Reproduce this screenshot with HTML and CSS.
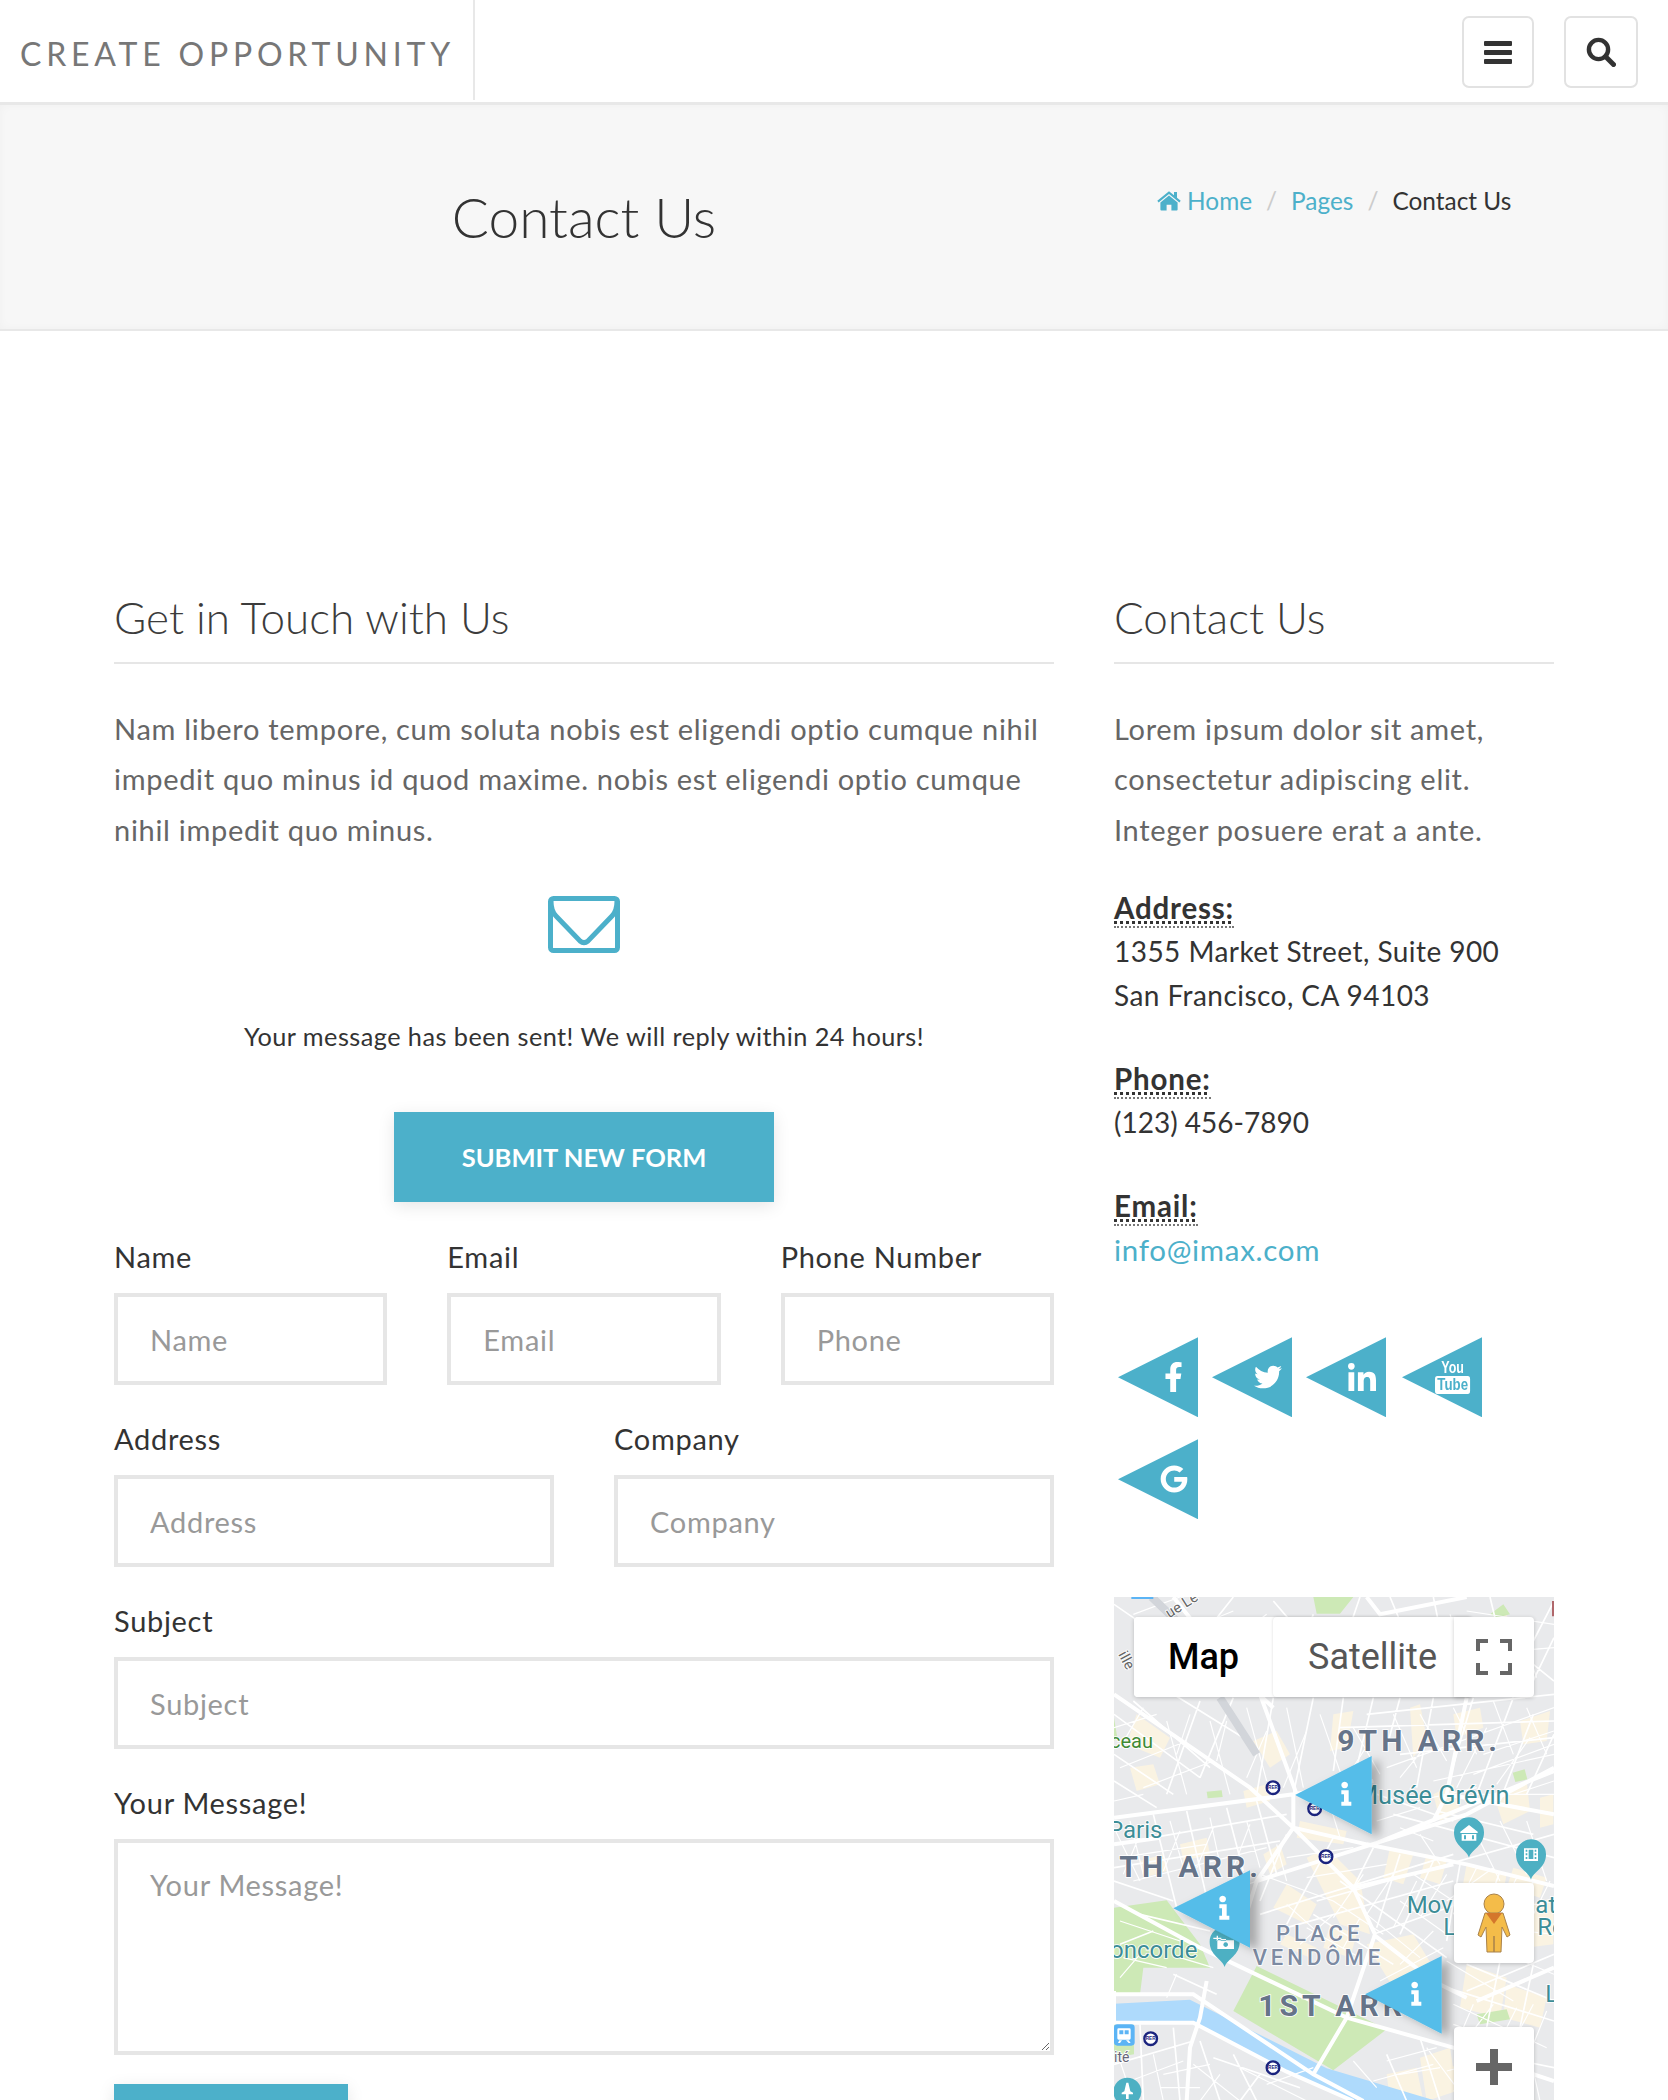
FILE: index.html
```html
<!DOCTYPE html>
<html lang="en">
<head>
    <meta charset="UTF-8">
    <meta name="viewport" content="width=device-width, initial-scale=1.0">
    <title>Contact Us</title>
    <link rel="stylesheet" href="styles.css">
</head>
<body>
    <header class="topbar">
        <a class="logo" href="#">CREATE OPPORTUNITY</a>
        <div class="topbar-actions">
            <button class="icon-btn" aria-label="Menu">
                <svg viewBox="0 0 28 28" width="28" height="28"><rect y="3" width="28" height="5" rx="1"/><rect y="12" width="28" height="5" rx="1"/><rect y="21" width="28" height="5" rx="1"/></svg>
            </button>
            <button class="icon-btn icon-btn-search" aria-label="Search">
                <svg viewBox="0 0 30 30" width="30" height="30"><circle cx="12.5" cy="12.5" r="9.6" fill="none" stroke="#333" stroke-width="4.4"/><path d="M19.5 19.5l8 8" stroke="#333" stroke-width="5" stroke-linecap="round"/></svg>
            </button>
        </div>
    </header>

    <section class="page-title">
        <h1>Contact Us</h1>
        <ol class="breadcrumb">
            <li><a href="#"><svg class="home-icon" viewBox="0 0 24 20" width="24" height="20"><path d="M12 4.4L3.4 11.5v7a.9.9 0 0 0 .9.9h5.3v-5.6h4.8v5.6h5.3a.9.9 0 0 0 .9-.9v-7zM23.7 9.8L20 6.8V1h-3v3.3L12 .3.300 9.800l1.300 1.600L12 2.900l10.400 8.500z"/></svg> Home</a></li>
            <li class="sep">/</li>
            <li><a href="#">Pages</a></li>
            <li class="sep">/</li>
            <li>Contact Us</li>
        </ol>
    </section>

    <main class="content">
        <div class="main-col">
            <h3 class="section-title">Get in Touch with Us</h3>
            <p class="lead">Nam libero tempore, cum soluta nobis est eligendi optio cumque nihil impedit quo minus id quod maxime. nobis est eligendi optio cumque nihil impedit quo minus.</p>

            <div class="sent-box">
                <svg class="sent-icon" viewBox="0 0 72 57" width="72" height="57"><rect x="2.500" y="2.500" width="67" height="52" rx="3" fill="none" stroke="#4cb0ca" stroke-width="5"/><path d="M3 5c0 7 2 12 5 15l24 25c2.500 2 5.500 2 8 0l24-25c3-3 5-8 5-15" fill="none" stroke="#4cb0ca" stroke-width="5"/></svg>
                <p class="sent-msg">Your message has been sent! We will reply within 24 hours!</p>
                <button class="btn">SUBMIT NEW FORM</button>
            </div>

            <form class="contact-form">
                <div class="form-row cols-3">
                    <div class="field"><label>Name</label><input type="text" placeholder="Name"></div>
                    <div class="field"><label>Email</label><input type="text" placeholder="Email"></div>
                    <div class="field"><label>Phone Number</label><input type="text" placeholder="Phone"></div>
                </div>
                <div class="form-row cols-2">
                    <div class="field"><label>Address</label><input type="text" placeholder="Address"></div>
                    <div class="field"><label>Company</label><input type="text" placeholder="Company"></div>
                </div>
                <div class="form-row">
                    <div class="field"><label>Subject</label><input type="text" placeholder="Subject"></div>
                </div>
                <div class="form-row">
                    <div class="field"><label>Your Message!</label><textarea placeholder="Your Message!"></textarea></div>
                </div>
                <button class="btn btn-send" type="button">SUBMIT</button>
            </form>
        </div>

        <aside class="side-col">
            <h3 class="section-title">Contact Us</h3>
            <p class="lead">Lorem ipsum dolor sit amet, consectetur adipiscing elit. Integer posuere erat a ante.</p>

            <div class="info">
                <abbr>Address:</abbr>
                <span>1355 Market Street, Suite 900</span>
                <span>San Francisco, CA 94103</span>
            </div>
            <div class="info">
                <abbr>Phone:</abbr>
                <span class="tel">(123) 456-7890</span>
            </div>
            <div class="info">
                <abbr>Email:</abbr>
                <a href="#">info@imax.com</a>
            </div>

            <div class="social">
                <a class="tri tri-fb" href="#"><svg viewBox="0 0 320 512" width="19" height="30"><path d="M279.14 288l14.22-92.66h-88.91v-60.13c0-25.35 12.42-50.06 52.24-50.06h40.42V6.26S260.43 0 225.36 0c-73.22 0-121.08 44.38-121.08 124.72v70.62H22.89V288h81.39v224h100.17V288z"/></svg></a>
                <a class="tri" href="#"><svg viewBox="0 0 512 512" width="28" height="28"><path d="M459.37 151.716c.325 4.548.325 9.097.325 13.645 0 138.72-105.583 298.558-298.558 298.558-59.452 0-114.68-17.219-161.137-47.106 8.447.974 16.568 1.299 25.34 1.299 49.055 0 94.213-16.568 130.274-44.832-46.132-.975-84.792-31.188-98.112-72.772 6.498.974 12.995 1.624 19.818 1.624 9.421 0 18.843-1.3 27.614-3.573-48.081-9.747-84.143-51.98-84.143-102.985v-1.299c13.969 7.797 30.214 12.67 47.431 13.319-28.264-18.843-46.781-51.005-46.781-87.391 0-19.492 5.197-37.36 14.294-52.954 51.655 63.675 129.3 105.258 216.365 109.807-1.624-7.797-2.599-15.918-2.599-24.04 0-57.828 46.782-104.934 104.934-104.934 30.213 0 57.502 12.67 76.67 33.137 23.715-4.548 46.456-13.645 66.599-25.665-7.798 24.366-24.366 44.833-46.132 57.827 21.117-2.273 41.584-8.122 60.426-16.243-14.292 20.791-32.161 39.308-52.628 54.253z"/></svg></a>
                <a class="tri" href="#"><svg viewBox="0 0 448 448" width="28" height="28"><path d="M100.28 448H7.4V148.9h92.88zM53.79 108.1C24.09 108.1 0 83.5 0 53.8a53.79 53.79 0 0 1 107.58 0c0 29.7-24.1 54.3-53.79 54.3zM447.9 448h-92.68V302.4c0-34.7-.7-79.2-48.29-79.2-48.29 0-55.69 37.7-55.69 76.7V448h-92.78V148.9h89.08v40.8h1.3c12.4-23.5 42.69-48.3 87.88-48.3 94 0 111.28 61.9 111.28 142.3V448z"/></svg></a>
                <a class="tri tri-yt" href="#"><span class="yt"><span>You</span><span class="yt-tube">Tube</span></span></a>
                <a class="tri" href="#"><svg viewBox="0 0 488 512" width="28" height="28"><path d="M488 261.8C488 403.3 391.1 504 248 504 110.8 504 0 393.2 0 256S110.8 8 248 8c66.8 0 123 24.5 166.3 64.9l-67.5 64.9C258.5 52.6 94.3 116.6 94.3 256c0 86.5 69.1 156.6 153.7 156.6 98.2 0 135-70.4 140.8-106.9H248v-85.3h236.1c2.3 12.7 3.9 24.9 3.9 41.4z"/></svg></a>
            </div>

            <div class="map">
                <svg class="map-canvas" viewBox="42 48 1320 1512">
                    <defs>
                        <filter id="pinshadow" x="-20%" y="-20%" width="160%" height="150%"><feDropShadow dx="24" dy="10" stdDeviation="14" flood-color="#000" flood-opacity=".28"/></filter>
                        <path id="info-i" d="M-14 -8h22v34h8v12h-30v-12h8v-22h-8zM-4 -34a10 10 0 1 1 -.1 0z"/>
                    </defs>
                    <rect class="m-base" x="42" y="48" width="1320" height="1512"/>

                    <!-- blocks -->
                    <path class="m-block" d="M930 380l30 -10 20 100 -40 60zM620 830l60 -30 100 100 30 160 -90 -30zM1100 850l120 30 -20 100 -120 -20zM1180 1000l180 -50v140l-160 20zM800 1090l140 -30 60 100 -120 60zM560 910l90 60 -30 60 -100 -50zM110 400l100 70 -30 60 -100 -40zM90 560l70 -10 20 60 -70 20zM960 1430l90 -30 20 130 -90 30zM1100 1150l120 40 -20 120 -120 -30zM600 720l140 30 -10 40 -140 -20zM1000 640l60 -30 20 80 -60 30zM1180 640l100 -40 10 90 -80 40zM430 630l70 -20 10 50 -70 20zM1050 1460l120 -50 90 100 -80 50 -100 0zM860 1480l90 -20 20 100 -100 0zM460 480l70 -30 40 70 -60 40zM700 400l60 -10 -20 110 -50 10zM1060 400l80 -20 10 60 -80 30zM1260 420l90 -30 -10 90 -70 10zM870 800l70 20 -30 90 -60 -20zM980 820l60 20 -20 70 -60 -20zM690 1030l80 30 -20 70 -80 -30zM560 1060l90 40 -20 30 -90 -40zM1240 860l100 30 -20 60 -100 -30zM1320 650l40 -10v90l-40 10zM1220 1210l120 40 -20 90 -110 -30zM490 820l50 -30 20 60 -50 30zM120 840l70 -20 10 50 -70 20zM240 790l80 -20 10 50 -80 20zM1150 120l70 -20 10 50 -70 20zM860 150l90 -20 10 60 -90 20z"/>

                    <!-- water and parks -->
                    <path class="m-water" d="M42 1268L270 1256 680 1462 1010 1560H760L560 1470 280 1322 42 1322z"/>
                    <path class="m-park" d="M470 1155L860 1345 700 1468 400 1290zM42 980L200 958 300 1090 330 1160 130 1160 120 1240 42 1240zM42 1330h60v90l-60 10zM640 48h120l-40 50h-70zM1170 100l40 -30 20 30 -40 10zM320 632l45 -4 3 20 -45 4zM1238 575l36 -10 8 30 -36 8zM42 410l10 60 -10 10zM1130 1300l90 -15 10 30 -90 15z"/>

                    <!-- small streets -->
                    <g class="m-road-thin">
                        <path d="M42 400L300 590M42 520L220 640M42 600L170 680M100 360L330 560M220 340L430 470M300 360L200 640M400 350L300 590M520 350L470 640M640 350L580 640M730 350L700 570M820 350L770 560M900 350L860 500M1000 350L950 620M1120 350L1040 620M1240 350L1130 640M1300 400L1200 660M1362 460L1280 640M800 400L1362 340M720 440L1362 420M900 520L1362 470M42 790L560 700M42 860L540 780M42 900L220 960M160 700L230 980M260 690L320 950M380 680L430 870M470 660L530 880M560 760L480 960M700 770L560 1030M820 800L760 920M900 820L830 1040M1000 840L900 1060M1080 850L1040 1080M1200 870L1120 1100M1300 900L1230 1100M650 960L1362 760M480 1000L1060 820M560 1040L1060 900M820 1060L1100 960M640 1000L880 1150M720 900L1040 1130M880 700L1362 830M1010 690L1300 760M830 640L1060 720M1100 1150L1362 1260M1040 1220L1362 1320M1200 1140L1160 1340M1300 1150L1260 1340M1362 1120L1100 1230M60 1090L160 1050M120 1000L330 1050M220 1180L350 1240M42 1450L280 1380M120 1330L130 1560M220 1340L240 1560M300 1380L360 1560M340 1430L600 1520M400 1420L470 1560M480 1480L420 1560M860 1420L920 1560M960 1370L1020 1560M1070 1400L1362 1460M1160 1370L1160 1560M1240 1400L1280 1560M42 70L260 220M160 48L320 200M400 48L280 200M520 60L640 200M640 100L540 340M780 48L680 340M870 48L900 120M1000 48L1060 340M1170 48L1240 340M1300 180L1362 60M1362 170L1280 340M1300 250L1362 300"/>
                    </g>
                    <g class="m-road-fine">
                        <path d="M42 440L170 400M60 560L260 480M130 620L340 540M200 420L260 640M330 420L390 640M440 380L500 600M560 380L610 620M660 400L730 600M760 440L840 580M880 400L950 560M960 400L1040 540M1060 380L1130 520M1180 360L1240 520M1280 380L1340 520M860 560L1362 380M1000 600L1362 520M1120 640L1362 640M830 720L960 680M900 740L1000 780M1120 740L1200 900M1200 720L1280 880M1280 720L1340 900M960 760L1020 850M680 640L720 770M440 720L480 860M330 710L360 850M210 720L250 860M90 720L130 880M42 740L120 900M100 900L500 800M300 960L530 880M480 880L700 960M560 830L760 800M620 890L860 850M560 970L660 1060M620 1040L780 1130M700 960L850 1060M800 1000L960 1130M900 960L1040 1060M940 880L1060 960M1040 960L1180 860M1140 1000L1362 960M1180 1040L1362 1060M1220 1120L1362 1180M1040 1140L1240 1260M1060 1270L1340 1400M1180 1270L1080 1400M1300 1270L1230 1400M980 1400L1100 1560M1040 1470L1200 1430M1060 1530L1300 1460M860 1440L1010 1400M820 1500L1000 1450M60 1020L240 1080M70 1130L200 1160M240 1130L340 1160M60 1440L100 1560M160 1420L190 1560M190 1480L330 1450M280 1450L420 1560M420 1460L620 1560M500 1510L640 1460M100 100L240 48M180 180L400 90M300 250L500 100M440 200L640 130M560 250L760 120M700 240L980 110M820 260L1040 190M1050 100L1130 340M1100 90L1362 130M1120 220L1362 200M1250 120L1310 290M900 200L960 340M350 120L420 200M42 660L130 640M130 380L60 500M270 400L230 520M380 420L350 540M500 450L440 590M620 450L550 620M810 480L740 590M990 480L900 590M1160 440L1070 620M1290 470L1190 610M1150 520L1362 450M1120 580L1362 490M950 660L1130 620M1240 640L1362 600M60 830L320 790M120 760L70 880M240 750L190 870M340 740L290 860M450 730L400 860M530 790L560 900M790 880L700 1010M880 880L800 1000M950 900L880 1040M1040 880L960 1010M1130 860L1060 1000M1250 890L1170 1050M1350 900L1280 1040M600 1090L700 1000M730 1100L780 1010M900 1150L1000 1050M840 1200L1030 1100M1120 1270L1090 1340M1250 1280L1200 1380M1340 1290L1300 1390M1060 1330L1230 1390M1100 1450L1120 1560M1200 1440L1210 1560M1300 1470L1320 1560M900 1480L1020 1460M760 1440L830 1520M60 1190L120 1120M230 1180L200 1250M90 1500L250 1440M180 1520L300 1520M360 1480L300 1560"/>
                    </g>
                    <!-- main roads -->
                    <g class="m-road">
                        <path d="M42 710L580 640 820 600M580 740L800 790 1100 850 1362 915M580 640V740L760 920 825 1060M42 340L450 620 580 740M820 790L1362 570M42 960L300 1100 740 1310 1060 1400 1362 1500M42 1240H280L640 1480 790 1560M42 1325H280L560 1472 760 1560M470 900L1100 700 1362 560M580 740L470 900 420 1060M760 920L1060 850M820 1060L1000 1200 1100 1250M1130 1260L1362 1160M740 1310L825 1060M640 1480L740 1310M800 48L840 100 1100 48M590 640L480 340M220 48L380 250 520 380M1100 350L1040 640 1000 720M1040 640L1362 700M42 790L180 770M320 1200L300 1310 270 1400 260 1560M42 1230V1330"/>
                    </g>
                    <g class="m-rail">
                        <path d="M360 350L470 520M155 48L230 120"/>
                    </g>

                    <!-- labels -->
                    <text class="m-green" x="30" y="502">ceau</text>
                    <text class="m-label" x="24" y="772">Paris</text>
                    <text class="m-label m-label-lg" x="768" y="670">Musée Grévin</text>
                    <text class="m-label" x="30" y="1131">oncorde</text>
                    <text class="m-label" x="920" y="995">Mov</text>
                    <text class="m-label" x="1030" y="1062">L</text>
                    <text class="m-label" x="1306" y="995">ate</text>
                    <text class="m-label" x="1312" y="1062">Re</text>
                    <text class="m-label" x="1336" y="1264">L</text>
                    <text class="m-small" x="42" y="1444">ité</text>
                    <text class="m-road-name" transform="translate(208 112) rotate(-32)">ue Le</text>
                    <text class="m-road-name" transform="translate(54 220) rotate(62)">ille</text>
                    <text class="m-arr" x="712" y="510">9TH ARR.</text>
                    <text class="m-arr" x="58" y="888">TH ARR.</text>
                    <text class="m-arr" x="475" y="1304">1ST ARR.</text>
                    <text class="m-place" x="528" y="1080">PLACE</text>
                    <text class="m-place" x="458" y="1152">VENDÔME</text>

                    <!-- station marks and POI pins -->
                    <g class="m-rer">
                        <circle cx="519" cy="620" r="19"/><circle cx="644" cy="683" r="19"/><circle cx="678" cy="827" r="19"/><circle cx="152" cy="1373" r="19"/><circle cx="519" cy="1460" r="19"/>
                    </g>
                    <g class="m-rer-text">
                        <text x="519" y="625">RER</text><text x="644" y="688">RER</text><text x="678" y="832">RER</text><text x="152" y="1378">RER</text><text x="519" y="1465">RER</text>
                    </g>
                    <g class="m-pin">
                        <path d="M1107 830c-8 -26 -45 -34 -45 -76a45 45 0 0 1 90 0c0 42 -37 50 -45 76z"/>
                        <path d="M1293 896c-8 -26 -45 -34 -45 -76a45 45 0 0 1 90 0c0 42 -37 50 -45 76z"/>
                        <path d="M374 1158c-8 -26 -45 -34 -45 -76a45 45 0 0 1 90 0c0 42 -37 50 -45 76z"/>
                        <circle cx="82" cy="1532" r="42"/>
                    </g>
                    <g class="m-pin-glyph">
                        <path d="M1081 752l26 -20 26 20v4h-52zM1085 759h44v20h-44zM1092 763v12h6v-12zM1116 763v12h6v-12z"/>
                        <path d="M1272 802h42v38h-42zM1277 806v6h5v-6zM1304 806v6h5v-6zM1277 817v6h5v-6zM1304 817v6h5v-6zM1277 828v6h5v-6zM1304 828v6h5v-6zM1286 806v28h14v-28z"/>
                        <path d="M352 1078h50v26h-50zM362 1074h16v6h-16zM377 1084a7 7 0 1 0 .1 0zM340 1070h10v-6h4v6h10v4h-10v6h-4v-6h-10z"/>
                        <path d="M79 1505h6l6 26 8 4v5h-13v14h-8v-14h-13v-5l8 -4z"/>
                    </g>
                    <rect class="m-metro" x="42" y="1330" width="62" height="64" rx="10"/>
                    <path class="m-metro-glyph" d="M56 1342h32a4 4 0 0 1 4 4v26a4 4 0 0 1 -4 4h-32a4 4 0 0 1 -4 -4v-26a4 4 0 0 1 4 -4zM58 1348v12h12v-12zM74 1348v12h12v-12zM58 1378h8l-6 8h-6zM78 1378h8l6 8h-6z"/>
                    <path class="m-edge" d="M1356 60h6v46h-6z"/>
                    <path class="m-topblue" d="M94 48h66v6h-66z"/>

                    <!-- info markers -->
                    <g class="m-marker">
                        <path d="M585 642L815 525V760z"/>
                        <path d="M220 982L450 868V1100z"/>
                        <path d="M795 1240L1025 1125V1358z"/>
                    </g>
                    <use class="m-i" href="#info-i" x="738" y="636"/>
                    <use class="m-i" href="#info-i" x="372" y="978"/>
                    <use class="m-i" href="#info-i" x="948" y="1236"/>
                </svg>

                <div class="map-type">
                    <button class="map-btn map-btn-on">Map</button>
                    <button class="map-btn">Satellite</button>
                </div>
                <button class="map-square map-full" aria-label="Fullscreen">
                    <svg viewBox="0 0 36 36" width="36" height="36"><path d="M0 0h12v4H4v8H0zM24 0h12v12h-4V4h-8zM0 24h4v8h8v4H0zM32 24h4v12H24v-4h8z" fill="#666"/></svg>
                </button>
                <button class="map-square map-peg" aria-label="Street view">
                    <svg viewBox="0 0 34 60" width="34" height="60"><circle cx="17" cy="11" r="10" fill="#f4bc49" stroke="#a9824a" stroke-width="1"/><path d="M8 20h18l7 22-3 2-5-10-1 25h-7v-16h-0v16H10L9 34l-5 10-3-2z" fill="#f4bc49" stroke="#a9824a" stroke-width="1"/><path d="M9 20h16l-8 11z" fill="#d4772c"/></svg>
                </button>
                <button class="map-square map-zoom" aria-label="Zoom in">
                    <svg viewBox="0 0 36 36" width="36" height="36"><path d="M14 0h8v14h14v8H22v14h-8V22H0v-8h14z" fill="#666"/></svg>
                </button>
            </div>
        </aside>
    </main>
</body>
</html>
```

FILE: styles.css
```css
html, body { height: 2100px; overflow: hidden; }
body { margin: 0; font-family: Lato, "Open Sans", sans-serif; font-size: 29px; letter-spacing: .7px; color: #333; background: #fff; }
a { color: #4cb0ca; text-decoration: none; }
button { font-family: inherit; cursor: pointer; }

/* top bar */
.topbar { height: 102px; display: flex; justify-content: space-between; align-items: flex-start; border-bottom: 3px solid #e8e8e8; }
.logo { height: 100px; width: 475px; box-sizing: border-box; padding-left: 20px; line-height: 108px; font-size: 32px; font-weight: 400; letter-spacing: 4.8px; color: #777; border-right: 2px solid #e8e8e8; white-space: nowrap; }
.topbar-actions { display: flex; gap: 30px; padding: 16px 30px 0 0; }
.icon-btn { width: 72px; height: 72px; padding: 0; background: #fff; border: 2px solid #e2e2e2; border-radius: 7px; display: flex; align-items: center; justify-content: center; }
.icon-btn svg { fill: #333; }
.icon-btn-search { width: 74px; }

/* page title band */
.page-title { height: 226px; box-sizing: border-box; background: #f7f7f7; border-bottom: 2px solid #e8e8e8; box-shadow: inset 0 0 10px rgba(0,0,0,.03); display: grid; grid-template-columns: 940px 440px; column-gap: 60px; padding: 0 114px; }
.page-title h1 { margin: 74px 0 0; font-size: 55px; line-height: 76px; font-weight: 300; letter-spacing: 0; text-align: center; color: #333; }
.breadcrumb { list-style: none; margin: 76px 0 0; padding: 0; display: flex; justify-content: center; gap: 14px; font-size: 24.4px; letter-spacing: 0; line-height: 40px; }
.breadcrumb .sep { color: #ccc; }
.home-icon { fill: #4cb0ca; vertical-align: -1px; }

/* main layout */
.content { display: grid; grid-template-columns: 940px 440px; column-gap: 60px; padding: 258px 114px 0; }
.section-title { margin: 0; height: 73px; line-height: 56px; font-size: 44px; font-weight: 300; letter-spacing: 0; color: #3c3c3c; border-bottom: 2px solid #e6e6e6; box-sizing: content-box; }
.lead { margin: 40px 0 0; line-height: 50.4px; color: #666; }

.sent-box { text-align: center; }
.sent-icon { display: block; margin: 41px auto 0; }
.sent-msg { margin: 61px 0 0; font-size: 25.3px; letter-spacing: .45px; line-height: 44px; }
.btn { background: #4cb0ca; color: #fff; border: 0; height: 90px; padding: 0; font-size: 25.5px; font-weight: 700; box-shadow: 0 4px 16px rgba(0,0,0,.1); }
.sent-box .btn { width: 380px; margin-top: 54px; display: block; margin-left: auto; margin-right: auto; }

.contact-form { margin-top: 32px; }
.form-row { display: grid; gap: 60px; margin-bottom: 31px; }
.cols-3 { grid-template-columns: repeat(3, 1fr); }
.cols-2 { grid-template-columns: repeat(2, 1fr); }
.field label { display: block; height: 48px; line-height: 46px; margin-bottom: 11px; color: #333; }
.field input, .field textarea { display: block; width: 100%; box-sizing: border-box; border: 4px solid #e6e6e6; border-radius: 0; padding: 0 32px; height: 92px; font: inherit; letter-spacing: inherit; color: #333; background: #fff; outline: 0; }
.field textarea { height: 216px; padding-top: 20px; line-height: 44px; }
.field input::placeholder, .field textarea::placeholder { color: #999; opacity: 1; }
.btn-send { width: 234px; margin-top: -2px; display: block; }

/* sidebar */
.info { margin-top: 44px; display: flex; flex-direction: column; align-items: flex-start; font-size: 28px; letter-spacing: .45px; line-height: 44px; }
.lead + .info { margin-top: 35px; }
.info abbr { font-size: 29.5px; letter-spacing: .8px; font-weight: 700; line-height: 36px; text-decoration: underline dotted; border-bottom: 2px dotted #777; margin-bottom: 1px; }
.info .tel { letter-spacing: 0; }
.info a { color: #4cb0ca; font-size: 29.5px; letter-spacing: .7px; line-height: 46px; }

.social { display: flex; flex-wrap: wrap; gap: 22px 14px; padding-left: 4px; margin-top: 64px; }
.tri { width: 80px; height: 80px; background: #4cb0ca; clip-path: polygon(0 50%, 100% 0, 100% 100%); display: flex; align-items: center; justify-content: flex-end; padding-right: 10px; box-sizing: border-box; }
.tri svg { fill: #fff; }
.tri-fb svg { margin-right: 5px; }
.tri-yt { margin-left: 2px; padding-right: 7px; }
.yt { display: flex; flex-direction: column; align-items: center; color: #fff; font-family: "Liberation Sans", sans-serif; font-size: 16px; letter-spacing: 0; line-height: 16px; font-weight: 700; transform: scaleX(.78); }
.yt-tube { background: #fff; color: #4cb0ca; border-radius: 3px; padding: 1px 3px; line-height: 16px; font-size: 17px; }

/* map */
.map { position: relative; width: 440px; height: 504px; margin-top: 78px; overflow: hidden; font-family: Roboto, sans-serif; letter-spacing: 0; }
.map-canvas { display: block; width: 440px; height: 504px; }
.m-base { fill: #e9eaec; }
.m-block { fill: #faf3e2; }
.m-water { fill: #aedafc; }
.m-park { fill: #cde9b6; }
.m-road-thin path { fill: none; stroke: #fff; stroke-width: 5; }
.m-road-fine path { fill: none; stroke: #fff; stroke-width: 3.5; }
.m-road path { fill: none; stroke: #fff; stroke-width: 12; }
.m-rail path { fill: none; stroke: #d2d5da; stroke-width: 24; }
.m-label, .m-green, .m-small, .m-road-name, .m-arr, .m-place { font-family: Roboto, sans-serif; paint-order: stroke; stroke: #fff; stroke-width: 5px; }
.m-label { font-size: 72px; fill: #3c8d97; }
.m-label-lg { font-size: 76px; }
.m-green { font-size: 60px; fill: #3f8a34; }
.m-small { font-size: 42px; fill: #667; }
.m-road-name { font-size: 44px; fill: #666; }
.m-arr { font-size: 90px; font-weight: 700; letter-spacing: 12px; fill: #667489; }
.m-place { font-size: 66px; font-weight: 500; letter-spacing: 12px; fill: #7d8ba3; }
.m-rer circle { fill: #fff; stroke: #1a237e; stroke-width: 7; }
.m-rer-text text { font-family: "Liberation Sans", sans-serif; font-size: 14px; font-weight: 700; fill: #1a237e; text-anchor: middle; }
.m-pin { fill: #4db0c3; }
.m-pin-glyph { fill: #fff; fill-rule: evenodd; }
.m-metro { fill: #5bb4f5; }
.m-metro-glyph { fill: #fff; fill-rule: evenodd; }
.m-edge { fill: #b0676b; }
.m-topblue { fill: #5bb4f5; }
.m-marker path { fill: #55bde9; filter: url(#pinshadow); }
.m-i { fill: #fff; fill-rule: evenodd; }

.map-type { position: absolute; left: 20px; top: 20px; display: flex; height: 80px; background: #fff; border-radius: 4px; box-shadow: 0 1px 4px rgba(0,0,0,.2); }
.map-btn { width: 139px; padding: 0; border: 0; background: #fff; font-family: Roboto, sans-serif; font-size: 36px; color: #565656; border-radius: 4px; }
.map-btn + .map-btn { width: 199px; box-shadow: 0 0 3px rgba(0,0,0,.15); }
.map-btn-on { color: #000; font-weight: 500; }
.map-square { position: absolute; width: 80px; height: 80px; padding: 0; background: #fff; border: 0; border-radius: 4px; display: flex; align-items: center; justify-content: center; box-shadow: 0 1px 4px rgba(0,0,0,.2); }
.map-full { left: 340px; top: 20px; width: 80px; border-radius: 0 4px 4px 0; }
.map-peg { left: 340px; top: 286px; }
.map-zoom { left: 340px; top: 430px; }
```
